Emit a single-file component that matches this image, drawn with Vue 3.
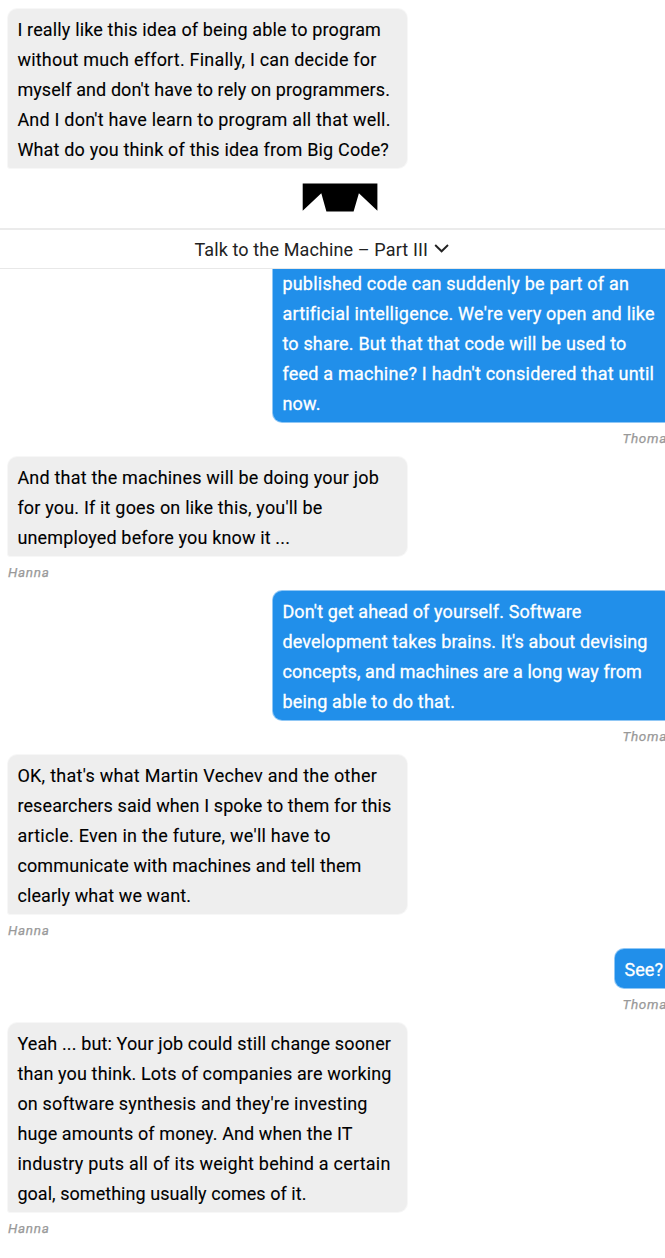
<script setup>
const FONT = 'Roboto, "Liberation Sans", sans-serif'
const ctx = document.createElement('canvas').getContext('2d')

// Tracks a line out so that it spans the given width in pixels.
function tracking(text, width, font) {
  ctx.font = `${font} ${FONT}`
  return { letterSpacing: ((width - ctx.measureText(text).width) / (text.length - 1)).toFixed(3) + 'px' }
}
const body = ([text, width]) => tracking(text, width, '400 18px')

const opening = [
  ['I really like this idea of being able to program', 363.5],
  ['without much effort. Finally, I can decide for', 359],
  ["myself and don't have to rely on programmers.", 372.5],
  ["And I don't have learn to program all that well.", 373],
  ['What do you think of this idea from Big Code?', 371.5],
]

const messages = [
  { author: 'Thomas', lines: [
    ['published code can suddenly be part of an', 346.5],
    ["artificial intelligence. We're very open and like", 371.5],
    ['to share. But that that code will be used to', 344],
    ["feed a machine? I hadn't considered that until", 371.5],
    ['now.', 38],
  ] },
  { author: 'Hanna', lines: [
    ['And that the machines will be doing your job', 361.5],
    ["for you. If it goes on like this, you'll be", 305],
    ['unemployed before you know it ...', 272.5],
  ] },
  { author: 'Thomas', lines: [
    ["Don't get ahead of yourself. Software", 299],
    ["development takes brains. It's about devising", 365],
    ['concepts, and machines are a long way from', 359.5],
    ['being able to do that.', 172.5],
  ] },
  { author: 'Hanna', lines: [
    ["OK, that's what Martin Vechev and the other", 359.5],
    ['researchers said when I spoke to them for this', 374],
    ["article. Even in the future, we'll have to", 313],
    ['communicate with machines and tell them', 344],
    ['clearly what we want.', 173.5],
  ] },
  { author: 'Thomas', lines: [['See?', 38.5]] },
  { author: 'Hanna', lines: [
    ['Yeah ... but: Your job could still change sooner', 373.5],
    ['than you think. Lots of companies are working', 374],
    ["on software synthesis and they're investing", 350],
    ['huge amounts of money. And when the IT', 335],
    ['industry puts all of its weight behind a certain', 373],
    ['goal, something usually comes of it.', 289],
  ] },
]
</script>

<template>
  <div class="page">
    <section class="intro">
      <div class="bubble">
        <div v-for="l in opening" :key="l[0]" class="line"><span :style="body(l)">{{ l[0] }}</span></div>
      </div>
    </section>

    <header>
      <div class="brand">
        <svg width="77" height="30" viewBox="0 0 77 30">
          <path d="M.7.6H75.4V27.8L56.9 10.2 51.6 28.5H24.4L19.3 10.2.7 27.8Z" />
        </svg>
      </div>
      <div class="chapter">
        <span :style="tracking('Talk to the Machine – Part III', 233.5, '400 18px')">Talk to the Machine – Part III</span>
        <svg class="chevron" width="16" height="12" viewBox="0 0 16 12">
          <path d="M1.2 2 7.6 8.3 14 2" />
        </svg>
      </div>
    </header>

    <main>
      <div class="chat">
        <article v-for="(m, i) in messages" :key="i" :class="{ own: m.author === 'Thomas', cut: i === 0, short: m.lines.length === 1 }">
          <div class="bubble">
            <div v-for="l in m.lines" :key="l[0]" class="line"><span :style="body(l)">{{ l[0] }}</span></div>
          </div>
          <div class="author">{{ m.author }}</div>
        </article>
      </div>
    </main>
  </div>
</template>

<style>
body { margin: 0; background: #fff; }
</style>

<style scoped>
.page {
  display: flex;
  flex-direction: column;
  width: 100%;
  height: 1258px;
  overflow: hidden;
  background: #fff;
  color: #000;
  font: 400 18px/30px Roboto, "Liberation Sans", sans-serif;
}
.intro { height: 163px; padding: 9px 0 0 8px; flex: none; }
.bubble {
  box-sizing: border-box;
  width: 399px;
  padding: 6px 0 3px 9.4px;
  border-radius: 9px 9px 9px 2px;
  background: #eee;
  box-shadow: 0 0 0 1px #f7f7f7;
  -webkit-text-stroke: .1px #000;
}
.line { height: 30px; white-space: nowrap; }
header { flex: none; height: 97px; color: #222; }
.brand {
  box-sizing: border-box;
  height: 58px;
  padding-top: 11px;
  padding-left: 302px;
  border-bottom: 2px solid #ebebeb;
}
.brand svg { display: block; fill: #000; }
.chapter {
  display: flex;
  align-items: center;
  box-sizing: border-box;
  height: 39px;
  padding: 2px 0 0 194.4px;
  border-bottom: 1px solid #e8e8e8;
  white-space: nowrap;
}
.chevron { margin: -3px 0 0 6px; fill: none; stroke: #222; stroke-width: 1.9; }
main { flex: 1; overflow: hidden; }
.chat { width: 672px; }
article { display: flex; flex-direction: column; align-items: flex-start; padding-left: 8px; }
.own { align-items: flex-end; padding-left: 0; }
.own .bubble {
  border-radius: 9px 9px 2px 9px;
  background: #218fea;
  box-shadow: 0 0 0 1px #90c7f5;
  color: #fff;
  -webkit-text-stroke: .3px #fff;
}
.cut .bubble { padding-top: 0; border-top-left-radius: 0; }
.short .bubble { width: 57px; }
.author {
  height: 35px;
  color: #999;
  font-size: 13.5px;
  font-style: italic;
  letter-spacing: .7px;
  line-height: 32px;
  -webkit-text-stroke: .25px #999;
}
.own .author { margin-right: -2.5px; }
</style>
